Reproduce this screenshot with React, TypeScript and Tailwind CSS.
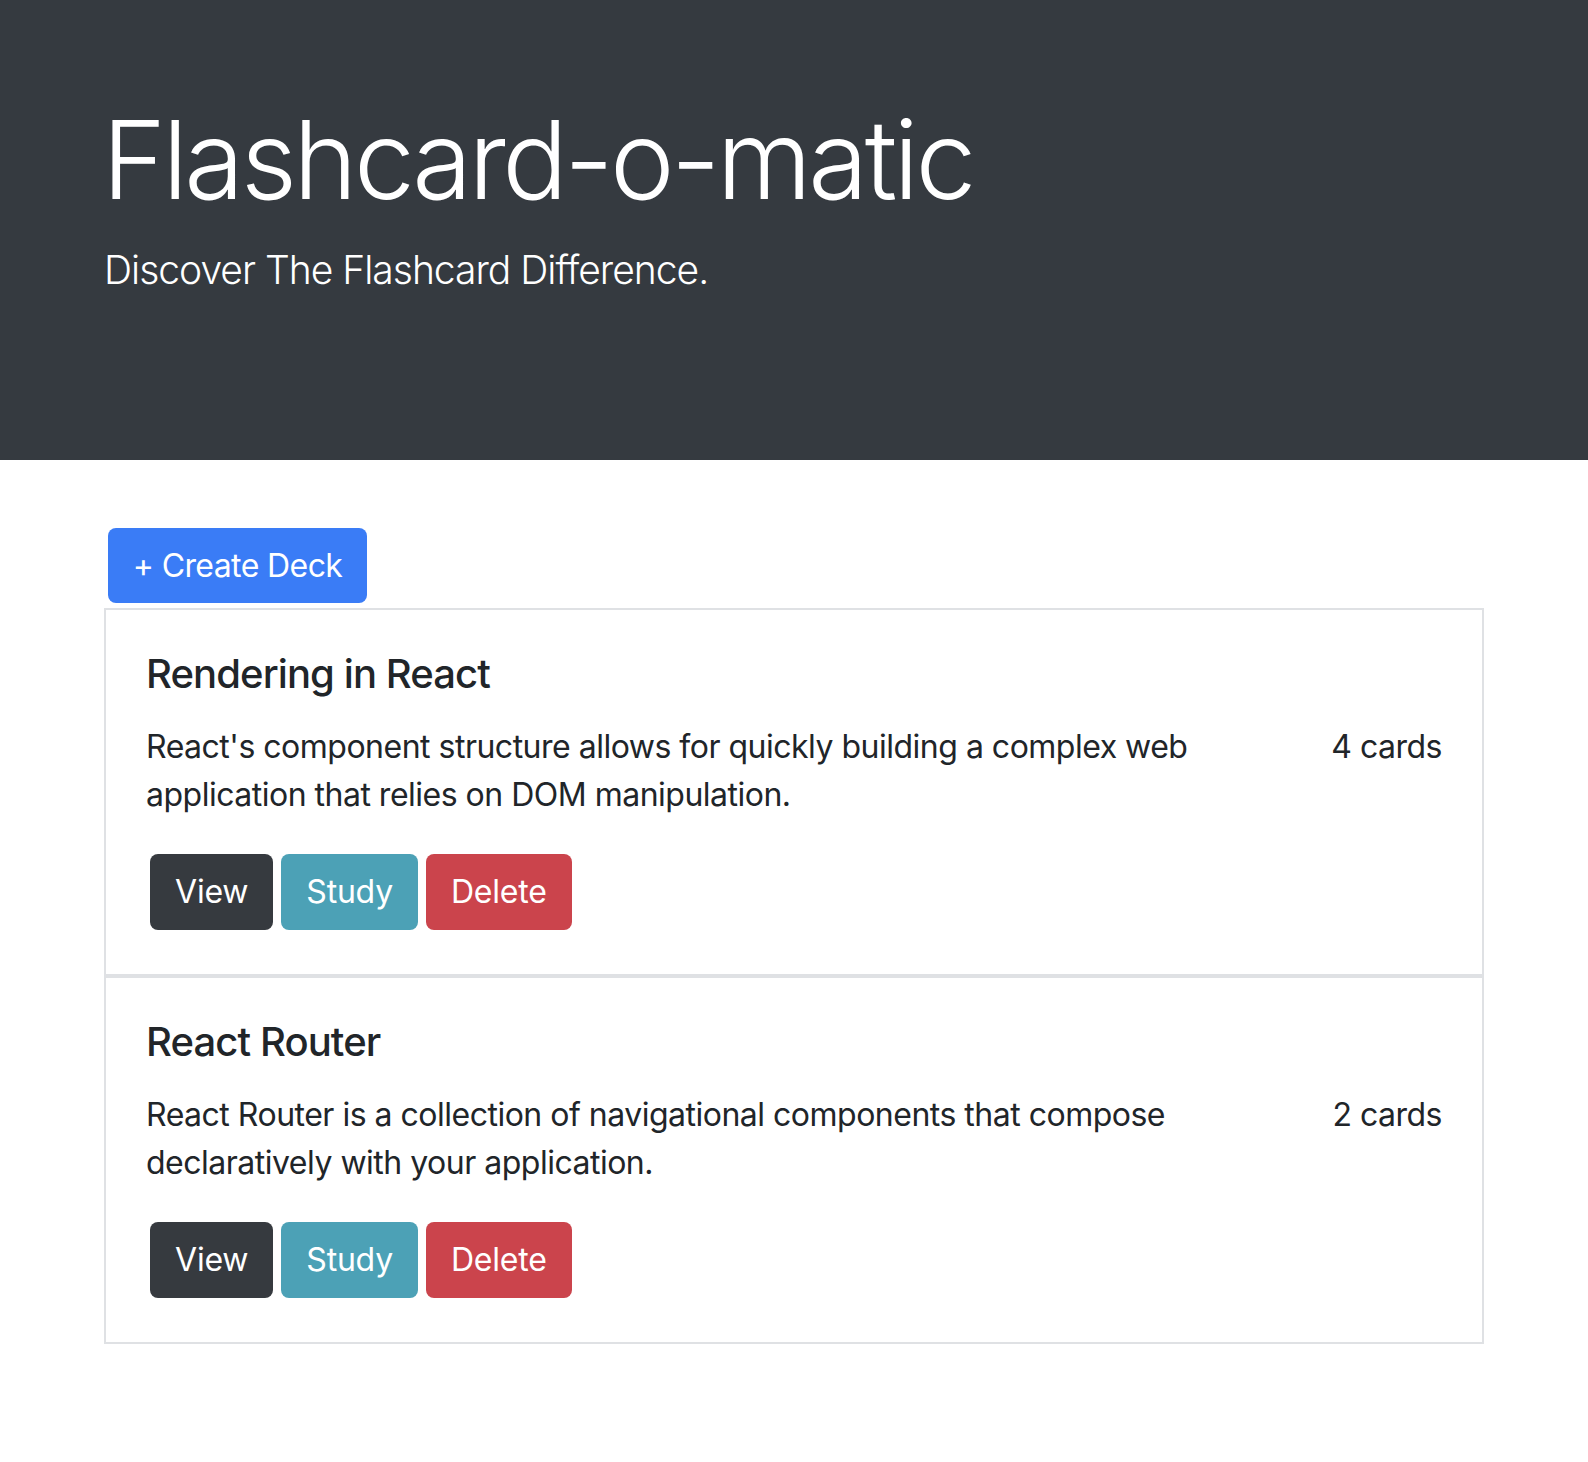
import React from 'react';

type Deck = {
  id: number;
  name: string;
  description: string;
  cards: number;
};

const decks: Deck[] = [
  {
    id: 1,
    name: 'Rendering in React',
    description:
      "React's component structure allows for quickly building a complex web application that relies on DOM manipulation.",
    cards: 4,
  },
  {
    id: 2,
    name: 'React Router',
    description:
      'React Router is a collection of navigational components that compose declaratively with your application.',
    cards: 2,
  },
];

const font = { fontFamily: 'Inter, "Noto Sans", sans-serif' };

function Header() {
  return (
    <header className="h-[460px] bg-[#353a40] text-white">
      <div className="mx-auto w-[1440px] px-[30px] pt-[94px]">
        <h1 className="ml-[-2px] text-[109px] leading-[1.2] font-light tracking-[-3.6px]">
          Flashcard-o-matic
        </h1>
        <p className="mt-[16px] text-[39px] leading-[1.5] font-light tracking-[-1px]">
          Discover The Flashcard Difference.
        </p>
      </div>
    </header>
  );
}

function DeckItem({ deck }: { deck: Deck }) {
  return (
    <li className="border-2 border-[#dfe1e4] px-[40px] pt-[40px] pb-[44px] tracking-[-0.5px]">
      <h5 className="text-[40px] leading-[48px] font-medium tracking-[-0.9px] text-[#212529]">
        {deck.name}
      </h5>
      <div className="mt-[25px] flex justify-between text-[32px] leading-[48px] text-[#212529]">
        <p className="w-[1080px]">{deck.description}</p>
        <span>{deck.cards} cards</span>
      </div>
      {/* 操作按鈕 */}
      <div className="mt-[35px] flex gap-[8px] pl-[4px] tracking-[-0.2px]">
        <button className="h-[76px] rounded-[8px] bg-[#363a3f] px-[25px] text-[32px] text-white">
          View
        </button>
        <button className="h-[76px] rounded-[8px] bg-[#4ca1b6] px-[25px] text-[32px] text-white">
          Study
        </button>
        <button className="h-[76px] rounded-[8px] bg-[#cb444c] px-[25px] text-[32px] text-white">
          Delete
        </button>
      </div>
    </li>
  );
}

export default function App() {
  return (
    <div className="min-h-[1462px] bg-white" style={font}>
      <Header />
      <main className="mx-auto w-[1440px] px-[30px] pt-[68px]">
        <button className="ml-[4px] h-[75px] w-[259px] rounded-[8px] bg-[#3a7cf6] text-[32px] tracking-[-0.6px] text-white">
          + Create Deck
        </button>
        <ul className="mt-[5px]">
          {decks.map((deck) => (
            <DeckItem key={deck.id} deck={deck} />
          ))}
        </ul>
      </main>
    </div>
  );
}
